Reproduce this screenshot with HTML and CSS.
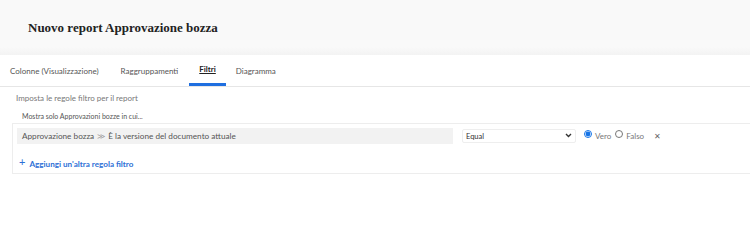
FILE: index.html
```html
<!DOCTYPE html>
<html lang="it">
<head>
<meta charset="utf-8">
<title>Nuovo report Approvazione bozza</title>
<link rel="stylesheet" href="styles.css">
</head>
<body>
<header class="page-header">
  <h1 class="title">Nuovo report Approvazione bozza</h1>
</header>
<nav class="tabs">
  <a class="tab">Colonne (Visualizzazione)</a>
  <a class="tab">Raggruppamenti</a>
  <a class="tab active">Filtri</a>
  <a class="tab">Diagramma</a>
</nav>
<main class="content">
  <p class="intro">Imposta le regole filtro per il report</p>
  <p class="subhead">Mostra solo Approvazioni bozze in cui...</p>
  <section class="rules">
    <div class="rule">
      <div class="field">Approvazione bozza <span class="sep">&#8811;</span> È la versione del documento attuale</div>
      <div class="op-wrap">
        <select class="op">
          <option>Equal</option>
        </select>
        <svg class="chev" width="7" height="5" viewBox="0 0 7 5"><path d="M1 1 L3.5 3.5 L6 1" fill="none" stroke="#333" stroke-width="1.4"/></svg>
      </div>
      <label class="radio"><input type="radio" name="v" checked> Vero</label>
      <label class="radio"><input type="radio" name="v"> Falso</label>
      <span class="remove">&#x2715;</span>
    </div>
    <a class="add"><span class="plus">+</span> Aggiungi un'altra regola filtro</a>
  </section>
</main>
</body>
</html>
```
FILE: styles.css
```css
html, body { margin: 0; padding: 0; background: #fff; }
body { font-family: "Lato", "Open Sans", sans-serif; color: #4a4a4a; }

.page-header {
  height: 55px;
  background: linear-gradient(#f9f9f9 0, #f9f9f9 47px, #f3f3f3 55px);
  display: flex;
  align-items: center;
  padding-left: 28px;
  box-sizing: border-box;
}
.title {
  margin: 0;
  font-family: "Liberation Serif", serif;
  font-weight: bold;
  font-size: 13px;
  color: #222;
}

.tabs {
  display: flex;
  height: 31px;
  border-bottom: 1px solid #e6e6e6;
  padding-left: 10px;
}
.tab {
  font-size: 8px;
  color: #555;
  display: flex;
  align-items: center;
  margin-right: 22px;
}
.tab.active {
  color: #222;
  text-decoration: underline;
  font-weight: bold;
  padding: 0 10px;
  margin-left: -11px;
  margin-right: 10px;
  border-bottom: 3px solid #1f6fe0;
}

.content { padding: 0 0 0 12px; }
.intro {
  margin: 6px 0 0 4px;
  font-size: 8px;
  line-height: 10px;
  color: #777;
}
.subhead {
  margin: 9px 0 0 10px;
  font-size: 7px;
  line-height: 9px;
  color: #555;
}
.rules {
  margin-top: 2px;
  border: 1px solid #ededed;
  border-right: none;
  height: 45px;
  padding: 4px 0 0 4px;
}
.rule {
  display: flex;
  align-items: center;
  height: 16px;
}
.field {
  width: 436px;
  height: 16px;
  background: #f2f2f2;
  font-size: 8.2px;
  color: #555;
  display: flex;
  align-items: center;
  padding-left: 5px;
  box-sizing: border-box;
  white-space: nowrap;
}
.sep { margin: 0 3px; color: #999; font-size: 8px; }
.op-wrap {
  position: relative;
  margin-left: 9px;
  width: 114px;
  height: 14px;
}
.op {
  appearance: none;
  -webkit-appearance: none;
  width: 100%;
  height: 14px;
  font-size: 7.5px;
  font-family: "Lato", sans-serif;
  color: #333;
  border: 1px solid #eee;
  border-radius: 2px;
  background: #fff;
  padding: 0 3px;
  margin: 0;
  display: block;
}
.chev {
  position: absolute;
  right: 4px;
  top: 4px;
  pointer-events: none;
}
.radio {
  display: flex;
  align-items: center;
  font-size: 8px;
  color: #777;
  margin-left: 8px;
}
.radio + .radio { margin-left: 4px; }
.radio input {
  width: 8px;
  height: 8px;
  margin: 0 3px 0 0;
  accent-color: #1473e6;
  position: relative;
  top: -2px;
}
.remove {
  margin-left: 10px;
  font-size: 8px;
  color: #666;
}
.add {
  display: flex;
  align-items: center;
  margin-top: 13px;
  padding-left: 2px;
  font-size: 8.1px;
  font-weight: bold;
  color: #2d6fd6;
}
.plus { font-size: 11px; font-weight: normal; margin-right: 4px; position: relative; top: -2px; }
```
